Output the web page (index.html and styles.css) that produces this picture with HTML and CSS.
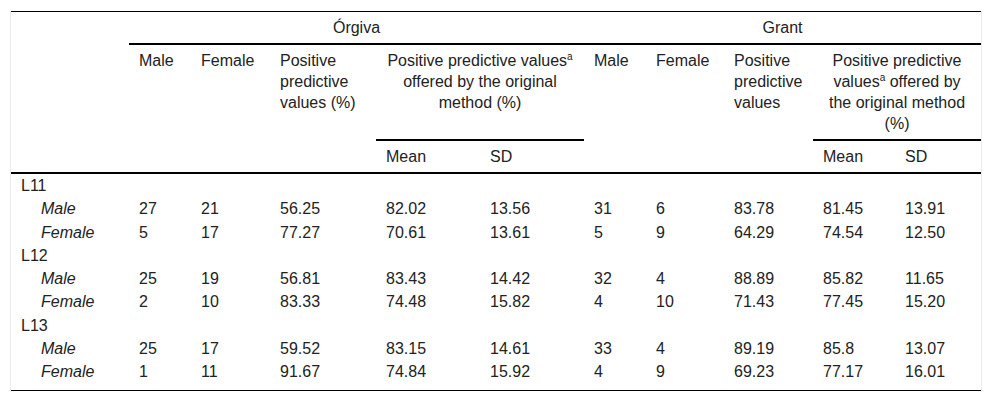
FILE: index.html
```html
<!DOCTYPE html>
<html>
<head>
<meta charset="utf-8">
<link rel="stylesheet" href="styles.css">
</head>
<body>
<div class="wrap">
<table class="data">
<colgroup>
<col class="c0"><col class="c1"><col class="c2"><col class="c3"><col class="c4"><col class="c5">
<col class="c6"><col class="c7"><col class="c8"><col class="c9"><col class="c10">
</colgroup>
<thead>
<tr class="r1">
<th rowspan="3"></th>
<th colspan="5" class="center rule">Órgiva</th>
<th colspan="5" class="center rule">Grant</th>
</tr>
<tr class="r2">
<th rowspan="2">Male</th>
<th rowspan="2">Female</th>
<th rowspan="2">Positive predictive values (%)</th>
<th colspan="2" class="center rule">Positive predictive values<sup>a</sup> offered by the original method (%)</th>
<th rowspan="2">Male</th>
<th rowspan="2">Female</th>
<th rowspan="2">Positive predictive values</th>
<th colspan="2" class="center rule">Positive predictive values<sup>a</sup> offered by the original method (%)</th>
</tr>
<tr class="r3">
<th>Mean</th><th>SD</th>
<th>Mean</th><th>SD</th>
</tr>
</thead>
<tbody>
<tr><td class="grp" colspan="11">L11</td></tr>
<tr><td class="sub">Male</td><td>27</td><td>21</td><td>56.25</td><td>82.02</td><td>13.56</td><td>31</td><td>6</td><td>83.78</td><td>81.45</td><td>13.91</td></tr>
<tr><td class="sub">Female</td><td>5</td><td>17</td><td>77.27</td><td>70.61</td><td>13.61</td><td>5</td><td>9</td><td>64.29</td><td>74.54</td><td>12.50</td></tr>
<tr><td class="grp" colspan="11">L12</td></tr>
<tr><td class="sub">Male</td><td>25</td><td>19</td><td>56.81</td><td>83.43</td><td>14.42</td><td>32</td><td>4</td><td>88.89</td><td>85.82</td><td>11.65</td></tr>
<tr><td class="sub">Female</td><td>2</td><td>10</td><td>83.33</td><td>74.48</td><td>15.82</td><td>4</td><td>10</td><td>71.43</td><td>77.45</td><td>15.20</td></tr>
<tr><td class="grp" colspan="11">L13</td></tr>
<tr><td class="sub">Male</td><td>25</td><td>17</td><td>59.52</td><td>83.15</td><td>14.61</td><td>33</td><td>4</td><td>89.19</td><td>85.8</td><td>13.07</td></tr>
<tr class="last"><td class="sub">Female</td><td>1</td><td>11</td><td>91.67</td><td>74.84</td><td>15.92</td><td>4</td><td>9</td><td>69.23</td><td>77.17</td><td>16.01</td></tr>
</tbody>
</table>
</div>
</body>
</html>
```

FILE: styles.css
```css
html, body {
  margin: 0;
  padding: 0;
  background: #fff;
}
body {
  padding: 11px 10px;
  font-family: "Liberation Sans", Arial, sans-serif;
  font-size: 16px;
  color: #222;
}
.wrap {
  border-left: 1px solid #ebebeb;
  border-right: 1px solid #ebebeb;
  width: 970px;
}
.data {
  width: 970px;
  table-layout: fixed;
  border-collapse: collapse;
  border-top: 1px solid #000;
  border-bottom: 1px solid #000;
}
.c0 { width: 118px; }
.c1 { width: 62px; }
.c2 { width: 79px; }
.c3 { width: 106px; }
.c4 { width: 104px; }
.c5 { width: 104px; }
.c6 { width: 62px; }
.c7 { width: 78px; }
.c8 { width: 89px; }
.c9 { width: 82px; }
.c10 { width: 86px; }

th {
  font-weight: normal;
  text-align: left;
  vertical-align: top;
  line-height: 21px;
  padding: 5px 10px;
}
th.center { text-align: center; }
th.rule { border-bottom: 2px solid #000; }
thead { border-bottom: 2px solid #000; }
sup {
  font-size: 10px;
  line-height: 0;
  vertical-align: 6px;
}
td {
  line-height: 21.3px;
  padding: 1px 10px;
  vertical-align: top;
}
td.sub {
  font-style: italic;
  padding-left: 30px;
}
tr.last td { padding-bottom: 7px; }
```
